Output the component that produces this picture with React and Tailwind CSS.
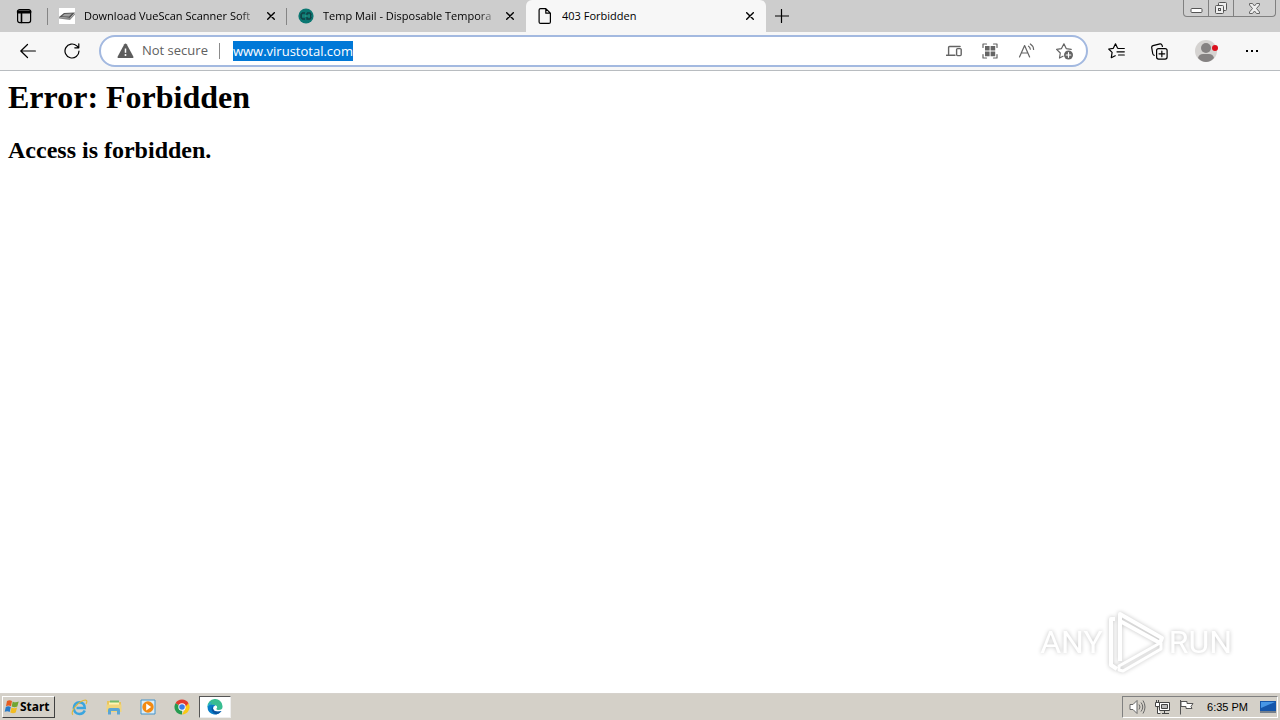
import React from "react";

const stroke = { fill: "none", stroke: "currentColor", strokeWidth: 1.2, strokeLinecap: "round", strokeLinejoin: "round" };

function TabActionsIcon() {
  return (
    <svg width="16" height="16" viewBox="0 0 16 16" {...stroke}>
      <rect x="1.6" y="1.6" width="13" height="13" rx="2" />
      <path d="M1.6 3.4h13M1.6 4.6h13M5.5 5v9.5" strokeWidth="1.6" />
    </svg>
  );
}

function ScannerIcon() {
  return (
    <svg width="16" height="16" viewBox="0 0 16 16">
      <path fill="#fff" d="M0 0h16v16H0z" />
      <path fill="#555" d="M5 5 16 4.5 11 10 0 9z" />
      <path fill="#a0a0a0" d="M5.5 6 13 5.6 10 8.6 3 8.3z" />
      <path fill="#888" d="m0 9 11 1 5-5v1.5L11 12 0 10.5z" />
    </svg>
  );
}

function TempMailIcon() {
  return (
    <svg width="16" height="16" viewBox="0 0 16 16">
      <circle cx="8" cy="8" r="7.6" fill="#0b7772" />
      <path d="M7 5H4.5L3 6.500v3L4.500 11H7M3 8h4M9 5h3l1 1.500L12 8H9.500m2.500 0 1 1.500-1 1.500H9V5" fill="none" stroke="#123f43" strokeWidth="1.300" />
      <path d="M4 8h8" stroke="#27b39d" />
    </svg>
  );
}

function PageIcon() {
  return (
    <svg width="16" height="16" viewBox="0 0 16 16" {...stroke}>
      <path d="M3.600.6h5.200l4.600 4.600v8.700q0 1.500-1.500 1.500H3.600q-1.500 0-1.500-1.500V2.100Q2.100.6 3.600.6zM8.800.8v4.400h4.400" />
    </svg>
  );
}

function CloseIcon() {
  return (
    <svg width="9" height="8" viewBox="0 0 9 8" {...stroke} strokeWidth="1.4">
      <path d="m.7.7 6.600 6.600m0-6.600L.7 7.300" />
    </svg>
  );
}

function Tab({ icon, title, active, divider }) {
  const shell = active
    ? "flex w-60 items-center rounded-t-md bg-[#f7f7f7] pr-[11px] pl-[11px]"
    : "relative flex w-[239px] items-center pr-[11px] pl-[11px]";
  return (
    <div className={shell}>
      <button type="button" role="tab" aria-selected={!!active} className="flex min-w-0 flex-1 items-center gap-[9px] text-left">
        <span className="shrink-0">{icon}</span>
        <span className={active ? "flex-1 truncate" : "flex-1 whitespace-nowrap [mask-image:linear-gradient(to_right,black_88%,transparent)]"}>
          {title}
        </span>
      </button>
      <button type="button" aria-label={"Close " + title} className="flex h-4 w-4 shrink-0 items-center justify-end">
        <CloseIcon />
      </button>
      {divider && <span className="absolute top-2 right-0 h-[17px] w-px bg-[#858585]" />}
    </div>
  );
}

function WindowControls() {
  return (
    <div className="ml-auto mr-1 flex h-[17px] rounded-b border border-t-0 border-[#808080] bg-[#cfcfcf] text-[#555]">
      <button type="button" aria-label="Minimize" className="flex w-[25px] items-center justify-center border-r border-[#808080]">
        <svg width="13" height="13" viewBox="0 0 13 13">
          <rect x="1" y="6.500" width="11" height="4" rx="1" fill="#fff" stroke="#555" />
        </svg>
      </button>
      <button type="button" aria-label="Restore" className="flex w-[25px] items-center justify-center border-r border-[#808080]">
        <svg width="14" height="14" viewBox="0 0 14 14" fill="#eee" stroke="#555">
          <rect x="4.500" y="1.500" width="8" height="8" rx="1" />
          <rect x="1.500" y="4.500" width="8" height="8" rx="1" />
          <rect x="4.500" y="7.500" width="2" height="2" />
        </svg>
      </button>
      <button type="button" aria-label="Close window" className="flex w-[41px] items-center justify-center">
        <svg width="13" height="13" viewBox="0 0 13 13">
          <path d="M1.500 1.500h3l2 2.500 2-2.500h3v1.500L8.500 6.500l3 3.500v1.500h-3L6.500 9l-2 2.500h-3V10l3-3.500-3-3.500z" fill="#eee" stroke="#666" />
        </svg>
      </button>
    </div>
  );
}

function TabStrip() {
  return (
    <header className="flex h-8 bg-[#cdcdcd] text-[11px] text-black">
      <div className="relative flex w-12 items-center justify-center">
        <button type="button" aria-label="Tab actions">
          <TabActionsIcon />
        </button>
        <span className="absolute top-2 right-0 h-[17px] w-px bg-[#858585]" />
      </div>
      <div role="tablist" className="flex">
        <Tab icon={<ScannerIcon />} title="Download VueScan Scanner Soft" divider />
        <Tab icon={<TempMailIcon />} title="Temp Mail - Disposable Tempora" />
        <Tab icon={<PageIcon />} title="403 Forbidden" active />
      </div>
      <button type="button" aria-label="New tab" className="flex w-8 items-center justify-center">
        <svg width="14" height="14" viewBox="0 0 14 14" {...stroke}>
          <path d="M6.500 .5v13M.5 7h13" />
        </svg>
      </button>
      <WindowControls />
    </header>
  );
}

function AddressBar() {
  return (
    <form className="flex h-8 min-w-0 flex-1 items-center rounded-full border-2 border-[#a3b9e0] bg-white pr-3 pl-4" onSubmit={(e) => e.preventDefault()}>
      <button type="button" className="flex shrink-0 items-center gap-2 text-[13px] text-[#606060]">
        <svg width="17" height="16" viewBox="0 0 17 16">
          <path d="M7.300 1.200q1.200-1.600 2.400 0l6.600 12.200q.6 1.600-1 1.600H1.700q-1.600 0-1-1.600z" fill="#5c5c5c" />
          <path d="M8.500 5.500v4.300" stroke="#fff" strokeWidth="1.500" />
          <circle cx="8.500" cy="12" r="1" fill="#fff" />
        </svg>
        Not secure
      </button>
      <span className="mr-[13px] ml-[11px] h-4 w-px shrink-0 bg-[#8b8b8b]" />
      <input type="text" aria-label="Address" defaultValue="www.virustotal.com" className="h-5 field-sizing-content bg-[#0078d7] text-[13px] text-white outline-none" />
      <div className="ml-auto flex shrink-0 items-center gap-5 text-[#646464]">
        <button type="button" aria-label="Open on another device">
          <svg width="16" height="16" viewBox="0 0 16 16" {...stroke} strokeWidth="1.4">
            <path d="M2.600 11V4.500q0-1 1-1h10.500M.6 12.300h8.400" />
            <rect x="10.600" y="5.600" width="4.600" height="7" rx="1" />
          </svg>
        </button>
        <button type="button" aria-label="Create QR code">
          <svg width="16" height="16" viewBox="0 0 16 16" {...stroke}>
            <path d="M1 4.500V1h3.500M11.500 1H15v3.500M15 11.500V15h-3.500M4.500 15H1v-3.500" />
            <path d="M3 3h4.600v4.600H3zM8.600 3h4.600v4.600H8.600zM3 8.600h4.600v4.600H3zM8.600 8.600h4.600v4.600H8.600z" fill="currentColor" stroke="none" />
          </svg>
        </button>
        <button type="button" aria-label="Read aloud">
          <svg width="18" height="16" viewBox="0 0 18 16" {...stroke}>
            <path d="M1.500 14 6.600 2.500 11.600 14M3.300 10h6.500M10.500 3.200q1.700 1 1.800 3M12.300 1q3.200 2 3.300 5.500" />
          </svg>
        </button>
        <button type="button" aria-label="Add to favorites">
          <svg width="18" height="18" viewBox="0 0 18 18" {...stroke}>
            <path d="M7 14.200 3.500 16l.8-5L.6 7.300l4.900-.7 2.400-4.800L10.200 6.600l5 .7" />
            <circle cx="12.500" cy="13" r="4.500" fill="currentColor" stroke="none" />
            <path d="M12.500 10.700v4.600M10.200 13h4.600" stroke="#fff" />
          </svg>
        </button>
      </div>
    </form>
  );
}

function Toolbar() {
  return (
    <nav className="flex h-[39px] items-center border-b border-[#b8bcc0] bg-[#f7f7f7] pr-5 pl-5 text-black">
      <div className="mr-[19px] flex gap-7">
        <button type="button" aria-label="Back">
          <svg width="16" height="16" viewBox="0 0 16 16" {...stroke}>
            <path d="M15.400 8H.8m6.700-6.500L.8 8l6.700 6.500" />
          </svg>
        </button>
        <button type="button" aria-label="Refresh">
          <svg width="16" height="16" viewBox="0 0 16 16" {...stroke}>
            <path d="M15 8a7 7 0 1 1-2.200-5.100L14.500 4.500M14.800.8v4h-4" />
          </svg>
        </button>
      </div>
      <AddressBar />
      <div className="ml-5 flex items-center gap-[26px]">
        <button type="button" aria-label="Favorites">
          <svg width="17" height="16" viewBox="0 0 17 16" {...stroke}>
            <path d="M9.800 5.200h-.2L7.500.8 5.300 5.300.7 6l3.400 3.400-.8 5.300 3.900-2M10.500 5.500h5.800M9 8.800h7.300M10.500 12h5.800" />
          </svg>
        </button>
        <button type="button" aria-label="Collections">
          <svg width="17" height="17" viewBox="0 0 17 17" {...stroke}>
            <path d="M3.200 12.300Q2 12 1.700 10.500L.7 4.600Q.5 3 2 2.600L9 .9q1.500-.3 2 1.200l.4 1.400" />
            <rect x="5.600" y="5.600" width="10.500" height="10.500" rx="2" />
            <path d="M10.850 8v5.700M8 10.850h5.700" />
          </svg>
        </button>
        <button type="button" aria-label="Profile">
          <svg width="24" height="24" viewBox="0 0 24 24">
            <circle cx="12" cy="12" r="11" fill="#d5d3d1" />
            <circle cx="12" cy="9" r="5" fill="#858282" />
            <path d="M4 19q1-4 5-4h6q4 0 5 4-3.500 4-8 4t-8-4z" fill="#858282" />
            <circle cx="21" cy="9" r="3" fill="#db101d" />
          </svg>
        </button>
        <button type="button" aria-label="Settings and more">
          <svg width="16" height="16" viewBox="0 0 16 16">
            <path d="M2 7h2v2H2zM7 7h2v2H7zM12 7h2v2h-2z" />
          </svg>
        </button>
      </div>
    </nav>
  );
}

function Watermark() {
  return (
    <div className="absolute right-12 bottom-5 flex items-center gap-1 font-[Roboto,sans-serif] text-[32px] font-normal leading-[62px] text-white drop-shadow-[0_0_2px_rgba(0,0,0,0.24)]">
      <span>ANY</span>
      <svg width="58" height="62" viewBox="0 0 58 62" fill="none" stroke="#fff" strokeWidth="4" strokeLinejoin="round">
        <path d="M8 8H4v46l6 4M13 50V3l42 24-2 5L13 10" />
        <path d="M53 32 12 55v4l4 1 38-22v-6" strokeWidth="3" />
      </svg>
      <span>RUN</span>
    </div>
  );
}

function TaskButton({ label, active, children }) {
  return (
    <button
      type="button"
      aria-label={label}
      className={
        active
          ? "flex h-[22px] w-8 items-center justify-center border border-t-[#555] border-r-[#eee] border-b-[#eee] border-l-[#555] bg-white"
          : "flex h-[22px] w-[34px] items-center justify-center"
      }
    >
      {children}
    </button>
  );
}

function Taskbar() {
  return (
    <footer className="flex h-[27px] items-center border-t border-[#d6d2cc] bg-[#d4d0c8] pr-0.5 pl-0.5 font-['Liberation_Sans',sans-serif] text-black">
      <button type="button" className="mr-2 flex h-[22px] items-center border border-t-white border-r-[#404040] border-b-[#404040] border-l-white pr-1 pl-px font-['Noto_Sans',sans-serif] text-[12px] font-bold">
        <svg width="16" height="16" viewBox="0 0 16 16">
          <path fill="#e65c20" d="M3 2q2.500-1.500 5 0L7 7.200q-2.500-1.500-5 0z" />
          <path fill="#71a533" d="M8.700 2.400q2.700 1.700 6 .1l-1.400 5.100q-2.800 1.300-5.600-.1z" />
          <path fill="#277ac8" d="M1.800 8q2.500-1.400 5 .1L5.700 13q-2.200-1.500-5-.2z" />
          <path fill="#f2bc22" d="M7.500 8.400q2.700 1.500 5.600.1l-1.400 5.100q-2.800 1.300-5.400-.2z" />
        </svg>
        Start
      </button>
      <TaskButton label="Internet Explorer">
        <svg width="17" height="17" viewBox="0 0 17 17" fill="none">
          <path d="M13.800 11.500q-1.500 3.500-5.300 3.500-5.500-.5-5.700-6 .4-5.300 5.800-5.700 5 .4 5.200 5.700H5.500" stroke="#3aa5df" strokeWidth="2.400" />
          <path d="M2 15.800Q-.5 14.500 4 8 10 1 14.500 1q2.500.3.500 4" stroke="#e2b733" strokeWidth="1.100" />
        </svg>
      </TaskButton>
      <TaskButton label="File Explorer">
        <svg width="16" height="16" viewBox="0 0 16 16">
          <path d="M1 2h5l1 1h8v10H1z" fill="#e9c65e" />
          <path d="M4 1.500h9v6H4z" fill="#73b96a" />
          <path d="M3 3.500h10v5H3z" fill="#fff4b2" />
          <path d="M.5 5.500h15V13H.5z" fill="#f0d57c" />
          <path d="M2 15.500V11q0-2 2-2h8q2 0 2 2v4.500h-3V12H5v3.500z" fill="#5ba5d4" />
        </svg>
      </TaskButton>
      <TaskButton label="Media Player">
        <svg width="16" height="16" viewBox="0 0 16 16">
          <path d="M1 1h14v14H1z" fill="#d9ecf8" stroke="#4593c8" />
          <circle cx="8" cy="8" r="5.700" fill="#f28a13" />
          <path d="m6.200 4.500 5 3.500-5 3.500z" fill="#fff" />
        </svg>
      </TaskButton>
      <TaskButton label="Chrome">
        <svg width="16" height="16" viewBox="0 0 16 16">
          <path d="M8 8 1.500 4.250a7.500 7.500 0 0 1 13 0z" fill="#e33b2e" />
          <path d="M8 8V15.500A7.500 7.500 0 0 1 1.500 4.250z" fill="#269b50" />
          <path d="M8 8 14.500 4.250A7.500 7.500 0 0 1 8 15.500l3-5z" fill="#fac915" />
          <path d="M8 4.250h6.500L11.300 8z" fill="#e33b2e" />
          <circle cx="8" cy="8" r="3.700" fill="#fff" />
          <circle cx="8" cy="8" r="2.800" fill="#397de7" />
        </svg>
      </TaskButton>
      <TaskButton label="Edge" active>
        <svg width="16" height="16" viewBox="0 0 16 16">
          <path d="M.5 8A7.500 7.500 0 0 1 15.500 7q.5 4-4 4-2.500 0-2-1.500Q11 8 9 6.500 4 4.500.5 8z" fill="#38bd91" />
          <path d="M.5 8Q1 3.500 6 3q-3 1-3 5z" fill="#27a9d5" />
          <path d="M.5 8Q4 4 8.500 6.500 6 7 6 9.500q1 5 8.500 2.500-3 4-7.500 3.500Q.5 14 .5 8z" fill="#087dc8" />
          <path d="M5.200 7Q3 13 9 15.400 12.500 15 14.500 12 7 14 5.800 9z" fill="#0754a0" />
        </svg>
      </TaskButton>
      <div className="ml-auto flex h-[22px] items-center gap-2 border border-t-[#808080] border-r-white border-b-white border-l-[#808080] pr-px pl-1.5">
        <button type="button" aria-label="Volume">
          <svg width="17" height="16" viewBox="0 0 17 16" fill="none" stroke="#666">
            <path d="M1 5.500h3l4-4v13l-4-4H1z" fill="#fff" />
            <path d="M10 5.500q2 2.500 0 5M12 3.500q3.500 4.500 0 9M14 1.500q4 6.500 0 13" />
          </svg>
        </button>
        <button type="button" aria-label="Network">
          <svg width="16" height="16" viewBox="0 0 16 16" fill="#fff" stroke="#444">
            <path d="M5.500 3.500h10v8h-10zM8 14.500h7M10.500 11.500v3" />
            <path d="M7.500 5.500h6v4h-6z" fill="#b9b9b9" />
            <path d="M1.500 3.500h4v4h-4zM2.500 1v2.500M4.500 1v2.500M3.500 7.500v7h3" />
          </svg>
        </button>
        <button type="button" aria-label="Action center">
          <svg width="17" height="16" viewBox="0 0 17 16" fill="#fff" stroke="#555">
            <path d="M2.500 1v14.500M3 2.500h6v2h6l-2 3 1 2H8v-2H3z" />
          </svg>
        </button>
        <time className="ml-1 text-[11px] whitespace-nowrap">6:35 PM</time>
        <button type="button" aria-label="Show desktop" className="ml-1">
          <svg width="16" height="16" viewBox="0 0 16 16">
            <path d="M0 2h16v10H0z" fill="#1556aa" />
            <path d="M1 3h14L1 9z" fill="#4796e5" />
            <path d="M0 12h16v2H0z" fill="#75808c" />
          </svg>
        </button>
      </div>
    </footer>
  );
}

export default function App() {
  return (
    <div className="flex min-h-screen flex-col bg-white font-['Open_Sans','Noto_Sans',sans-serif]">
      <TabStrip />
      <Toolbar />
      <main className="relative flex-1 px-2 pt-2 font-['Liberation_Serif',serif] font-bold text-black">
        <h1 className="text-[32px] leading-9">Error: Forbidden</h1>
        <h2 className="mt-[21px] text-[24px] leading-7">Access is forbidden.</h2>
        <Watermark />
      </main>
      <Taskbar />
    </div>
  );
}
